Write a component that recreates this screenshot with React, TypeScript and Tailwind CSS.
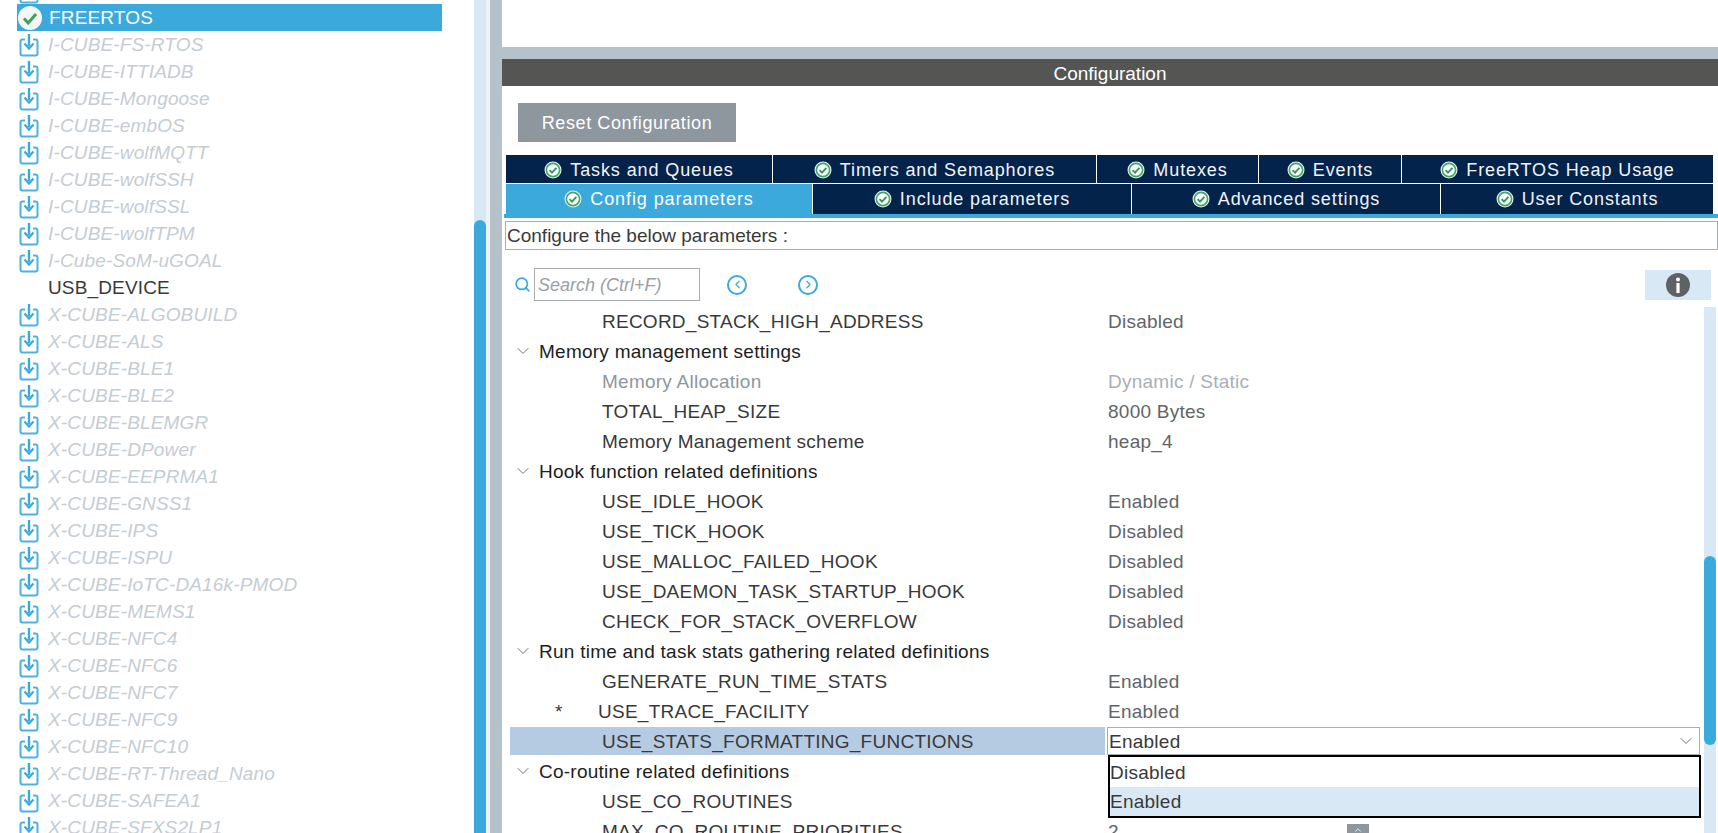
import { ChevronDown, ChevronUp, Search, ChevronLeft, ChevronRight } from "lucide-react";

const treeItems = [
  "I-CUBE-FS-RTOS",
  "I-CUBE-ITTIADB",
  "I-CUBE-Mongoose",
  "I-CUBE-embOS",
  "I-CUBE-wolfMQTT",
  "I-CUBE-wolfSSH",
  "I-CUBE-wolfSSL",
  "I-CUBE-wolfTPM",
  "I-Cube-SoM-uGOAL",
  "USB_DEVICE",
  "X-CUBE-ALGOBUILD",
  "X-CUBE-ALS",
  "X-CUBE-BLE1",
  "X-CUBE-BLE2",
  "X-CUBE-BLEMGR",
  "X-CUBE-DPower",
  "X-CUBE-EEPRMA1",
  "X-CUBE-GNSS1",
  "X-CUBE-IPS",
  "X-CUBE-ISPU",
  "X-CUBE-IoTC-DA16k-PMOD",
  "X-CUBE-MEMS1",
  "X-CUBE-NFC4",
  "X-CUBE-NFC6",
  "X-CUBE-NFC7",
  "X-CUBE-NFC9",
  "X-CUBE-NFC10",
  "X-CUBE-RT-Thread_Nano",
  "X-CUBE-SAFEA1",
  "X-CUBE-SFXS2LP1",
];

type Row = { name: string; value?: string; kind?: "group" | "muted" | "star" | "selected" | "spin" };

const rows: Row[] = [
  { name: "RECORD_STACK_HIGH_ADDRESS", value: "Disabled" },
  { name: "Memory management settings", kind: "group" },
  { name: "Memory Allocation", value: "Dynamic / Static", kind: "muted" },
  { name: "TOTAL_HEAP_SIZE", value: "8000 Bytes" },
  { name: "Memory Management scheme", value: "heap_4" },
  { name: "Hook function related definitions", kind: "group" },
  { name: "USE_IDLE_HOOK", value: "Enabled" },
  { name: "USE_TICK_HOOK", value: "Disabled" },
  { name: "USE_MALLOC_FAILED_HOOK", value: "Disabled" },
  { name: "USE_DAEMON_TASK_STARTUP_HOOK", value: "Disabled" },
  { name: "CHECK_FOR_STACK_OVERFLOW", value: "Disabled" },
  { name: "Run time and task stats gathering related definitions", kind: "group" },
  { name: "GENERATE_RUN_TIME_STATS", value: "Enabled" },
  { name: "USE_TRACE_FACILITY", value: "Enabled", kind: "star" },
  { name: "USE_STATS_FORMATTING_FUNCTIONS", value: "Enabled", kind: "selected" },
  { name: "Co-routine related definitions", kind: "group" },
  { name: "USE_CO_ROUTINES" },
  { name: "MAX_CO_ROUTINE_PRIORITIES", value: "2", kind: "spin" },
];

const DownloadIcon = () => (
  <svg width="20" height="24" viewBox="0 0 20 24" fill="none" className="shrink-0">
    <path d="M6 6.5H3.5a2 2 0 0 0-2 2v12a2 2 0 0 0 2 2h13a2 2 0 0 0 2-2v-12a2 2 0 0 0-2-2H14" stroke="#4db1e2" strokeWidth="2" />
    <path d="M10 1v12" stroke="#3ba9dc" strokeWidth="2.4" />
    <path d="M5.5 10.5L10 15.5l4.5-5" stroke="#3ba9dc" strokeWidth="2.2" />
  </svg>
);

const TabCheck = () => (
  <svg width="18" height="18" viewBox="0 0 18 18" className="shrink-0">
    <circle cx="9" cy="9" r="8.5" fill="#e8f3ec" />
    <circle cx="9" cy="9" r="6.6" fill="#fff" stroke="#3ea76a" strokeWidth="1.6" />
    <path d="M5.6 9.2l2.4 2.4 4.4-4.8" fill="none" stroke="#2f9a5c" strokeWidth="1.9" />
  </svg>
);

const Tab = ({ label, width, active, h }: { label: string; width: number; active?: boolean; h: string }) => (
  <div
    style={{ width }}
    className={`${h} shrink-0 flex items-center justify-center gap-[8px] border-r border-white text-[18px] tracking-[0.9px] ${
      active ? "bg-[#3ba9dc] text-white" : "bg-[#03234b] text-[#f2f4f6]"
    }`}
  >
    <TabCheck />
    <span>{label}</span>
  </div>
);

const ParamRow = ({ row }: { row: Row }) => {
  if (row.kind === "group") {
    return (
      <div className="h-[30px] flex items-center text-[#1d1d1f]">
        <ChevronDown size={20} strokeWidth={1.2} className="ml-[3px] text-[#6d7378]" />
        <span className="ml-[6px]">{row.name}</span>
      </div>
    );
  }
  const selected = row.kind === "selected";
  const muted = row.kind === "muted";
  return (
    <div className="h-[30px] flex items-center">
      <div
        className={`w-[595px] h-[28px] shrink-0 flex items-center ${selected ? "bg-[#b5cbe2]" : ""} ${
          muted ? "text-[#8f979e]" : "text-[#39393b]"
        }`}
      >
        {row.kind === "star" ? (
          <>
            <span className="ml-[45px] w-[43px]">*</span>
            <span>{row.name}</span>
          </>
        ) : (
          <span className="ml-[92px]">{row.name}</span>
        )}
      </div>
      {selected ? (
        <div className="relative ml-[2px] w-[593px] h-[28px] border border-[#a8adb0] flex items-center justify-between pl-[1px] pr-[3px] text-[#39393b]">
          <span>{row.value}</span>
          <ChevronDown size={20} strokeWidth={1.2} className="text-[#6d7378]" />
          <div className="absolute left-[0px] top-[27px] w-[593px] h-[63px] bg-white border-2 border-black z-10">
            <div className="h-[30px] flex items-center">Disabled</div>
            <div className="h-[29px] flex items-center bg-[#d9e8f5]">Enabled</div>
          </div>
        </div>
      ) : (
        <div className={`ml-[3px] h-[30px] flex items-center ${muted ? "text-[#a9b0b6]" : "text-[#616568]"}`}>
          <span>{row.value}</span>
          {row.kind === "spin" && (
            <span className="ml-[228px] mt-[8px] w-[22px] h-[22px] bg-[#8f979e] flex justify-center">
              <ChevronUp size={10} strokeWidth={2} className="text-white mt-[1px]" />
            </span>
          )}
        </div>
      )}
    </div>
  );
};

export default function App() {
  return (
    <div className="w-[1718px] h-[833px] overflow-hidden bg-white flex text-[19px] tracking-[0.25px] leading-none font-['Liberation_Sans',Arial,sans-serif]">
      {/* Tree panel */}
      <div className="w-[474px] h-full overflow-hidden shrink-0 tracking-[0.15px]">
        <div className="h-[4px] ml-[19px] overflow-hidden flex items-end">
          <DownloadIcon />
        </div>
        <div className="ml-[17px] w-[425px] h-[27px] bg-[#3ba9dc] flex items-center text-white">
          <svg width="24" height="24" viewBox="0 0 24 24" className="ml-[1px] shrink-0">
            <circle cx="12" cy="12" r="12" fill="#f4f7f5" />
            <path d="M6 12.5l4.2 4.5L18 8" fill="none" stroke="#3fa15f" strokeWidth="3" />
          </svg>
          <span className="ml-[7px]">FREERTOS</span>
        </div>
        {treeItems.map((item) => (
          <div key={item} className="h-[27px] pl-[19px] flex items-center">
            {item === "USB_DEVICE" ? (
              <span className="ml-[29px] text-[#39393b]">{item}</span>
            ) : (
              <>
                <DownloadIcon />
                <span className="ml-[9px] italic text-[#c5ccd3]">{item}</span>
              </>
            )}
          </div>
        ))}
      </div>

      {/* Tree scrollbar */}
      <div className="w-[12px] h-full bg-[#d9e8f5] shrink-0 pt-[220px]">
        <div className="h-full bg-[#3ba9dc] rounded-t-[6px]" />
      </div>
      <div className="w-[4px] h-full bg-[#eef2f5] shrink-0" />
      <div className="w-[12px] h-full bg-[#b6c2c9] shrink-0" />

      {/* Right panel */}
      <div className="flex-1 min-w-0 flex flex-col">
        <div className="h-[47px] bg-white" />
        <div className="h-[12px] bg-[#b6c2c9]" />
        <div className="h-[27px] pt-[2px] bg-[#555654] flex items-center justify-center text-white text-[19px] tracking-normal">
          Configuration
        </div>

        <div className="pl-[16px] pt-[17px]">
          <div className="w-[218px] h-[39px] bg-[#8f979e] flex items-center justify-center text-white text-[18px] tracking-[0.6px]">
            Reset Configuration
          </div>
        </div>

        <div className="pl-[4px] pt-[13px] flex">
          <Tab label="Tasks and Queues" width={267} h="h-[28px] pt-[1px]" />
          <Tab label="Timers and Semaphores" width={324} h="h-[28px] pt-[1px]" />
          <Tab label="Mutexes" width={162} h="h-[28px] pt-[1px]" />
          <Tab label="Events" width={143} h="h-[28px] pt-[1px]" />
          <Tab label="FreeRTOS Heap Usage" width={312} h="h-[28px] pt-[1px]" />
        </div>
        <div className="pl-[4px] pt-[1px] flex">
          <Tab label="Config parameters" width={307} h="h-[30px] pb-[1px]" active />
          <Tab label="Include parameters" width={319} h="h-[30px] pb-[1px]" />
          <Tab label="Advanced settings" width={309} h="h-[30px] pb-[1px]" />
          <Tab label="User Constants" width={273} h="h-[30px] pb-[1px]" />
        </div>
        <div className="ml-[2px] h-[4px] bg-[#3ba9dc]" />

        <div className="ml-[3px] mt-[3px] h-[29px] border border-[#a8adb0] flex items-center pl-[1px] text-[#39393b] tracking-normal">
          Configure the below parameters :
        </div>

        <div className="mt-[18px] h-[33px] flex items-center pr-[7px]">
          <Search size={17} strokeWidth={2.4} className="ml-[12px] text-[#3ba9dc]" />
          <div className="ml-[3px] w-[166px] h-[33px] border border-[#a8adb0] flex items-center pl-[3px] italic text-[#9aa0a6] text-[18px] tracking-normal">
            Search (Ctrl+F)
          </div>
          <div className="ml-[27px] w-[20px] h-[20px] rounded-full border-2 border-[#3ba9dc] flex items-center justify-center">
            <ChevronLeft size={13} strokeWidth={2.2} className="text-[#3ba9dc]" />
          </div>
          <div className="ml-[51px] w-[20px] h-[20px] rounded-full border-2 border-[#3ba9dc] flex items-center justify-center">
            <ChevronRight size={13} strokeWidth={2.2} className="text-[#3ba9dc]" />
          </div>
          <div className="ml-auto w-[66px] h-[30px] bg-[#d9e8f5] flex items-center justify-center">
            <svg width="24" height="24" viewBox="0 0 24 24">
              <circle cx="12" cy="12" r="12" fill="#5d6265" />
              <circle cx="12" cy="6.5" r="2" fill="#fff" />
              <rect x="10.4" y="10" width="3.2" height="10" fill="#fff" />
            </svg>
          </div>
        </div>

        <div className="flex flex-1 min-h-0 pt-[5px]">
          <div className="ml-[8px] w-[1192px] overflow-hidden">
            {rows.map((row) => (
              <ParamRow key={row.name} row={row} />
            ))}
          </div>
          <div className="ml-[2px] mt-[1px] w-[12px] bg-[#d9e8f5] flex flex-col">
            <div className="h-[249px]" />
            <div className="h-[189px] bg-[#3ba9dc] rounded-[6px]" />
          </div>
        </div>
      </div>
    </div>
  );
}
